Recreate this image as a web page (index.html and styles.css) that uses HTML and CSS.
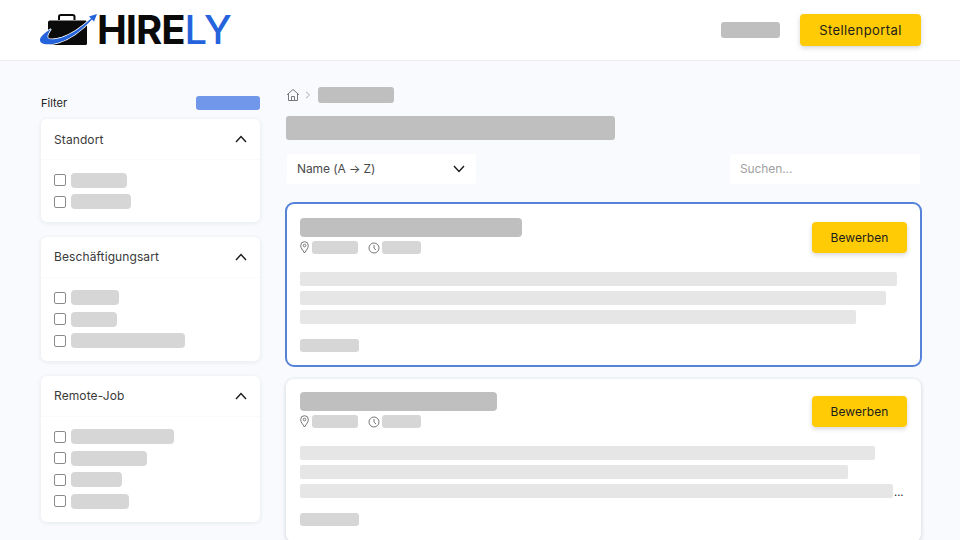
FILE: index.html
```html
<!DOCTYPE html>
<html lang="de">
<head>
<meta charset="utf-8">
<title>Hirely</title>
<link rel="stylesheet" href="styles.css">
</head>
<body>
<header class="topbar">
  <a class="logo">
    <svg class="logo-mark" width="58" height="34" viewBox="0 0 58 34">
      <path class="lm-handle" d="M19 7V3.500C19 2.500 20 2 21 2H32.500C33.500 2 34.500 2.500 34.500 3.500V7"/>
      <path class="lm-case" d="M8 9.500C8 8 9 7.500 10.500 7.500H44.500C46 7.500 47 8 47 9.500V30.500C47 31.500 46 32 45 32H10.500C9 32 8 31.500 8 30.500Z"/>
      <path class="lm-swoosh" d="M11 16C4 20 0 24 0 27C0 32 9 32.500 19 29.500C32 25.500 44 15 52 6.500L54 8.500L57 1L49 3.500L51 5.500C42 14 32 21 22 24.500C14 27 8 27 7.500 24C7.200 22 9 19 11 16Z"/>
    </svg>
    <span class="wordmark"><span class="wm-dark">HIRE</span><span class="wm-blue">LY</span></span>
  </a>
  <div class="top-actions">
    <span class="ph ph-dark top-ph"></span>
    <button class="btn btn-top">Stellenportal</button>
  </div>
</header>

<div class="page">
  <aside class="sidebar">
    <div class="filter-head">
      <span class="filter-title">Filter</span>
      <span class="filter-reset"></span>
    </div>

    <section class="fcard">
      <div class="fcard-head"><span>Standort</span>
        <svg class="chev" width="12" height="8" viewBox="0 0 12 8"><path d="M1 7l5-5.500L11 7" /></svg>
      </div>
      <div class="fcard-body">
        <div class="opt"><i class="cb"></i><span class="ph ph-light w56"></span></div>
        <div class="opt"><i class="cb"></i><span class="ph ph-light w60"></span></div>
      </div>
    </section>

    <section class="fcard">
      <div class="fcard-head"><span>Beschäftigungsart</span>
        <svg class="chev" width="12" height="8" viewBox="0 0 12 8"><path d="M1 7l5-5.500L11 7" /></svg>
      </div>
      <div class="fcard-body">
        <div class="opt"><i class="cb"></i><span class="ph ph-light w48"></span></div>
        <div class="opt"><i class="cb"></i><span class="ph ph-light w46"></span></div>
        <div class="opt"><i class="cb"></i><span class="ph ph-light w114"></span></div>
      </div>
    </section>

    <section class="fcard">
      <div class="fcard-head"><span>Remote-Job</span>
        <svg class="chev" width="12" height="8" viewBox="0 0 12 8"><path d="M1 7l5-5.500L11 7" /></svg>
      </div>
      <div class="fcard-body">
        <div class="opt"><i class="cb"></i><span class="ph ph-light w103"></span></div>
        <div class="opt"><i class="cb"></i><span class="ph ph-light w76"></span></div>
        <div class="opt"><i class="cb"></i><span class="ph ph-light w51"></span></div>
        <div class="opt"><i class="cb"></i><span class="ph ph-light w58"></span></div>
      </div>
    </section>
  </aside>

  <main class="content">
    <nav class="crumbs">
      <svg class="home" width="14" height="14" viewBox="0 0 14 14"><path d="M1 6.800L7 1.500l6 5.300M2.500 5.800V12.500H11.500V5.800M5.500 12.500V8.500H8.500V12.500"/></svg>
      <svg class="crumb-sep" width="6" height="8" viewBox="0 0 6 8"><path d="M1 .800L4.500 4 1 7.200"/></svg>
      <span class="ph ph-dark crumb-ph"></span>
    </nav>
    <div class="ph ph-dark heading-ph"></div>

    <div class="toolbar">
      <div class="select"><span>Name (A → Z)</span>
        <svg class="chev" width="12" height="8" viewBox="0 0 12 8"><path d="M1 1l5 5.500L11 1"/></svg>
      </div>
      <div class="search">Suchen...</div>
    </div>

    <article class="job job-active">
      <div class="job-top">
        <div class="job-info">
          <div class="ph ph-dark job-title t222"></div>
          <div class="job-meta">
            <svg class="mi" width="9" height="13" viewBox="0 0 9 13"><path d="M4.500 12C2.500 9 .700 7 .700 4.500a3.800 3.800 0 0 1 7.600 0C8.300 7 6.500 9 4.500 12Z"/><circle cx="4.500" cy="4.500" r="1.300"/></svg>
            <span class="ph ph-light m46"></span>
            <svg class="mi mi-clock" width="12" height="12" viewBox="0 0 12 12"><circle cx="6" cy="6" r="5"/><path d="M6 3v3.200L8 8"/></svg>
            <span class="ph ph-light m39"></span>
          </div>
        </div>
        <button class="btn btn-apply">Bewerben</button>
      </div>
      <div class="lines">
        <div class="ln l597"></div>
        <div class="ln l586"></div>
        <div class="ln l556"></div>
      </div>
      <div class="ph ph-light job-tag"></div>
    </article>

    <article class="job">
      <div class="job-top">
        <div class="job-info">
          <div class="ph ph-dark job-title t197"></div>
          <div class="job-meta">
            <svg class="mi" width="9" height="13" viewBox="0 0 9 13"><path d="M4.500 12C2.500 9 .700 7 .700 4.500a3.800 3.800 0 0 1 7.600 0C8.300 7 6.500 9 4.500 12Z"/><circle cx="4.500" cy="4.500" r="1.300"/></svg>
            <span class="ph ph-light m46"></span>
            <svg class="mi mi-clock" width="12" height="12" viewBox="0 0 12 12"><circle cx="6" cy="6" r="5"/><path d="M6 3v3.200L8 8"/></svg>
            <span class="ph ph-light m39"></span>
          </div>
        </div>
        <button class="btn btn-apply">Bewerben</button>
      </div>
      <div class="lines">
        <div class="ln l575"></div>
        <div class="ln l548"></div>
        <div class="ln-row"><div class="ln l593"></div><span class="dots">...</span></div>
      </div>
      <div class="ph ph-light job-tag"></div>
    </article>
  </main>
</div>
</body>
</html>
```
FILE: styles.css
```css
* { box-sizing: border-box; }
html, body { margin: 0; height: 540px; overflow: hidden; }
body {
  background: #f8fafd;
  font-family: Inter, "Liberation Sans", sans-serif;
  color: #1f1f1f;
}

.topbar {
  height: 61px;
  background: #fff;
  border-bottom: 1px solid #ececec;
  display: flex;
  align-items: center;
  justify-content: space-between;
  padding: 0 39px 0 40px;
}
.logo { display: flex; align-items: center; height: 60px; }
.logo-mark { display: block; margin-top: -1px; overflow: visible; }
.lm-handle { fill: none; stroke: #0a0a0a; stroke-width: 2; }
.lm-case { fill: #0a0a0a; }
.lm-swoosh { fill: #2563dc; stroke: #fff; stroke-width: 1.500; paint-order: stroke; }
.wordmark {
  font-size: 40px;
  line-height: 40px;
  letter-spacing: -1.050px;
  margin-top: -1px;
  margin-left: -1px;
}
.wm-dark { font-weight: 700; color: #0a0a0a; }
.wm-blue { font-weight: 500; color: #2563dc; }

.top-actions { display: flex; align-items: center; gap: 20px; }
.top-ph { width: 59px; height: 16px; }

.btn {
  border: 0;
  background: #ffcb05;
  border-radius: 4px;
  font-family: inherit;
  font-size: 13px;
  color: #1c1c1c;
  box-shadow: 0 2px 5px rgba(0, 0, 0, .16);
  padding: 0;
}
.btn-top { width: 121px; height: 32px; margin-top: -1px; letter-spacing: .4px; }
.btn-apply { width: 95px; height: 31px; flex: none; margin: 4px 0 0; font-size: 12px; letter-spacing: .05px; }

.ph { display: block; border-radius: 3px; }
.ph-dark { background: #bfbfbf; }
.ph-light { background: #d6d6d6; }

.page {
  display: flex;
  align-items: flex-start;
  gap: 26px;
  padding: 0 39px 0 41px;
}

.sidebar { width: 219px; flex: none; padding-top: 34px; }
.filter-head {
  display: flex;
  align-items: center;
  justify-content: space-between;
  height: 16px;
  margin-bottom: 8px;
}
.filter-title { font-size: 11px; font-weight: 400; color: #222; }
.filter-reset { width: 64px; height: 14px; border-radius: 3px; background: #7097ea; }

.fcard {
  background: #fff;
  border-radius: 6px;
  box-shadow: 0 1px 5px rgba(30, 50, 80, .09);
  margin-bottom: 14.500px;
}
.fcard-head {
  height: 41px;
  display: flex;
  align-items: center;
  justify-content: space-between;
  padding: 0 13px;
  font-size: 12px;
  letter-spacing: .1px;
  color: #3a3a3a;
  border-bottom: 1px solid #fafafa;
}
.chev { fill: none; stroke: #1a1a1a; stroke-width: 1.400; display: block; }
.fcard-body {
  padding: 12.500px 13px;
  display: flex;
  flex-direction: column;
  gap: 6px;
}
.opt { display: flex; align-items: center; gap: 5px; height: 15.500px; }
.cb {
  width: 12px;
  height: 12px;
  border: 1px solid #8a8a8a;
  border-radius: 2px;
  background: #fff;
  flex: none;
}
.opt .ph { height: 15px; border-radius: 4px; }
.w46 { width: 46px; }
.w48 { width: 48px; }
.w51 { width: 51px; }
.w56 { width: 56px; }
.w58 { width: 58px; }
.w60 { width: 60px; }
.w76 { width: 76px; }
.w103 { width: 103px; }
.w114 { width: 114px; }

.content { flex: 1; min-width: 0; padding-top: 26px; }
.crumbs { display: flex; align-items: center; height: 16px; }
.home { fill: none; stroke: #777; stroke-width: 1; display: block; }
.crumb-sep { fill: none; stroke: #aaa; stroke-width: 1; display: block; margin: 0 7px 0 5px; }
.crumb-ph { width: 76px; height: 16px; }
.heading-ph { width: 329px; height: 24px; margin-top: 13px; }

.toolbar {
  display: flex;
  justify-content: space-between;
  margin: 14px 1px 19px;
}
.select, .search {
  height: 30px;
  background: #fff;
  display: flex;
  align-items: center;
  font-size: 12px;
  border-radius: 2px;
  padding-bottom: 1px;
}
.select {
  width: 189px;
  padding-left: 10px;
  padding-right: 11px;
  justify-content: space-between;
  color: #4a4a4a;
  letter-spacing: -.1px;
}
.search { width: 190px; padding-left: 10px; padding-right: 10px; color: #a0a0a0; letter-spacing: -.1px; }

.job {
  background: #fff;
  border-radius: 8px;
  box-shadow: 0 1px 4px rgba(30, 40, 60, .2);
  margin-bottom: 12px;
  padding: 13px 14px 13px;
  height: 163px;
}
.job-active {
  box-shadow: none;
  outline: 2px solid #5583da;
  outline-offset: -1px;
  height: 163px;
  margin: 0 0 13px;
  padding-top: 15px;
}
.job-top { display: flex; justify-content: space-between; }
.job-title { height: 19px; border-radius: 4px; }
.t222 { width: 222px; }
.t197 { width: 197px; }
.job-meta { display: flex; align-items: center; height: 13px; margin-top: 4px; }
.job-meta .ph { height: 13px; }
.mi { fill: none; stroke: #777; stroke-width: 1; display: block; flex: none; }
.mi-clock { margin-left: 10px; }
.job-meta .mi + .ph { margin-left: 3px; }
.job-meta .mi-clock + .ph { margin-left: 2px; }
.m46 { width: 46px; }
.m39 { width: 39px; }

.lines { margin-top: 18px; display: flex; flex-direction: column; gap: 5px; }
.ln { height: 14px; background: #e6e6e6; border-radius: 2px; }
.ln-row { display: flex; align-items: flex-end; gap: 1px; }
.dots { font-size: 11px; line-height: 11px; color: #222; }
.l597 { width: 597px; }
.l586 { width: 586px; }
.l556 { width: 556px; }
.l575 { width: 575px; }
.l548 { width: 548px; }
.l593 { width: 593px; }
.job-tag { width: 59px; height: 13px; margin-top: 15px; }
```
